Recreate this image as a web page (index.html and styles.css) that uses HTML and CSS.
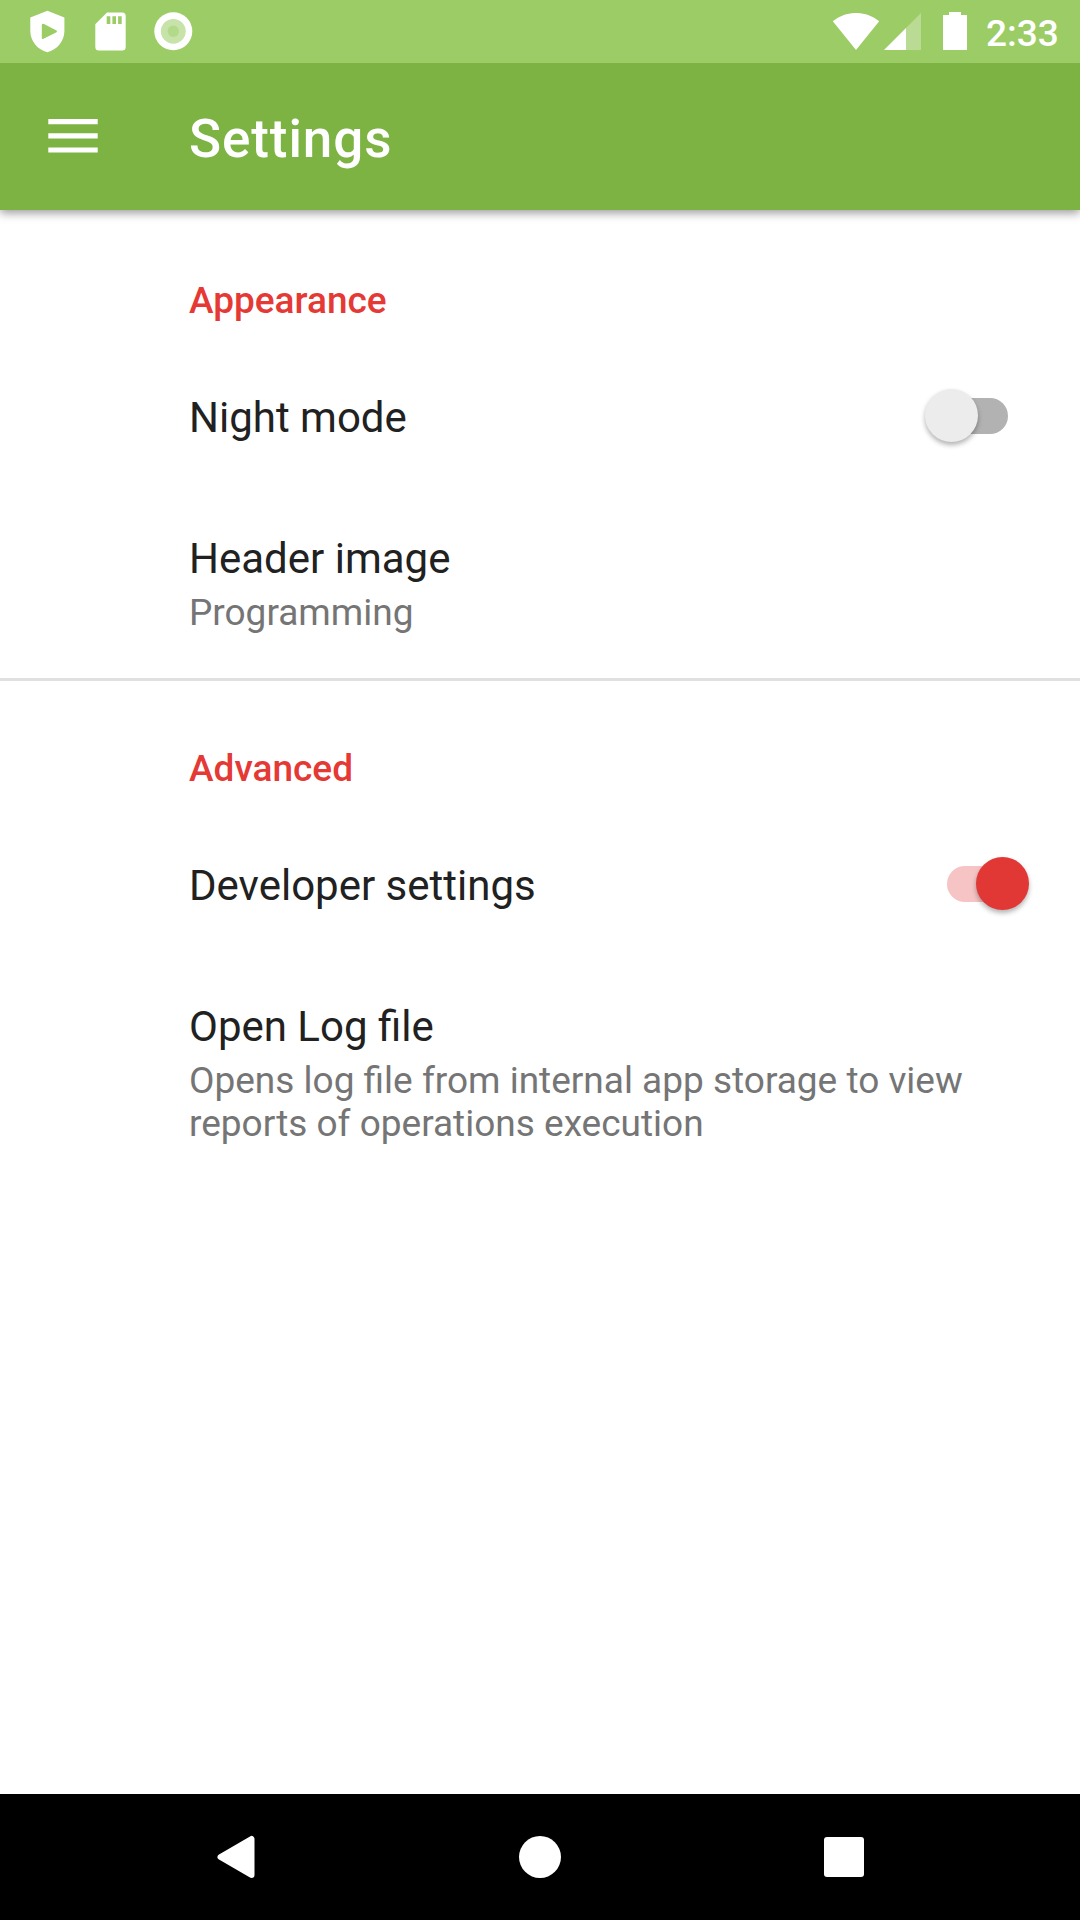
FILE: index.html
```html
<!DOCTYPE html>
<html lang="en">
<head>
<meta charset="utf-8">
<title>Settings</title>
<link rel="stylesheet" href="styles.css">
</head>
<body>
<header class="status-bar">
  <div class="status-left">
    <svg class="icon-shield" width="36" height="44" viewBox="30 10 36 44"><path fill="#fff" fill-rule="evenodd" d="M47.4 10.8 64.4 17.500V31C64.400 41 57 50 47.400 52.200C37.700 50 30.300 41 30.300 31V17.500ZM42.800 23.700Q41.800 23.700 41.800 25V38Q41.800 39.300 43 39L56.500 32.300Q57.500 31.400 56.500 30.600L44 23.900Z"/></svg>
    <svg class="icon-sd" width="32" height="40" viewBox="95 12 32 40"><path fill="#fff" fill-rule="evenodd" d="M107 12.500H122.200Q125.700 12.500 125.700 16V47Q125.700 50.500 122.200 50.500H98.800Q95.300 50.500 95.300 47V24.200ZM106.700 16.300V24H110.300V16.300ZM112.400 16.300V24H116V16.300ZM118.100 16.300V24H121.700V16.300Z"/></svg>
    <svg class="icon-record" width="40" height="40" viewBox="0 0 40 40"><circle cx="20.300" cy="20.300" r="19" fill="#fff"/><circle cx="20.300" cy="20.300" r="12.400" fill="#c7e3a9"/><circle cx="20.300" cy="20.300" r="5.700" fill="#b3d98a"/></svg>
  </div>
  <div class="status-right">
    <svg class="icon-wifi" width="48" height="38" viewBox="832 13 48 38"><path fill="#fff" d="M832.800 21.300C846.500 10.200 865.500 10.200 879.200 21.300L856 50Z"/></svg>
    <svg class="icon-signal" width="38" height="38" viewBox="884 13 38 38"><path fill="#fff" opacity=".3" d="M906 28 921 13V50H906Z"/><path fill="#fff" d="M884 50 906 28V50Z"/></svg>
    <svg class="icon-battery" width="24" height="38" viewBox="0 0 24 38"><path fill="#fff" d="M6 0H18V3H24V38H0V3H6Z"/></svg>
    <span class="clock">2:33</span>
  </div>
</header>
<div class="toolbar">
  <svg class="menu" width="50" height="34" viewBox="0 0 50 34"><path fill="#fff" d="M.3 0H49.700V5.200H.3ZM.3 14.200H49.700V19.400H.3ZM.3 28.400H49.700V33.600H.3Z"/></svg>
  <h1 class="title">Settings</h1>
</div>
<main class="settings">
  <section class="group">
    <h2 class="category">Appearance</h2>
    <div class="row-switch">
      <div class="label">Night mode</div>
      <div class="switch"></div>
    </div>
    <div class="row">
      <div class="label">Header image</div>
      <div class="summary">Programming</div>
    </div>
  </section>
  <section class="group group-divided">
    <h2 class="category">Advanced</h2>
    <div class="row-switch">
      <div class="label">Developer settings</div>
      <div class="switch switch-on"></div>
    </div>
    <div class="row">
      <div class="label">Open Log file</div>
      <div class="summary">Opens log file from internal app storage to view reports of operations execution</div>
    </div>
  </section>
</main>
<nav class="nav-bar">
  <svg width="41" height="44" viewBox="0 0 41 44"><path fill="#fff" stroke="#fff" stroke-width="6" stroke-linejoin="round" d="M5.500 22 36.500 4V40Z"/></svg>
  <svg width="42" height="42" viewBox="0 0 42 42"><circle cx="21" cy="21" r="21" fill="#fff"/></svg>
  <svg width="40" height="40" viewBox="0 0 40 40"><rect width="40" height="40" rx="3" fill="#fff"/></svg>
</nav>
</body>
</html>
```
FILE: styles.css
```css
* {
  box-sizing: border-box;
}

body {
  margin: 0;
  width: 1080px;
  height: 1920px;
  display: flex;
  flex-direction: column;
  overflow: hidden;
  background: #fff;
  font-family: Roboto, sans-serif;
}

svg {
  display: block;
  flex: none;
}

.status-bar {
  position: relative;
  z-index: 1;
  height: 63px;
  flex: none;
  display: flex;
  justify-content: space-between;
  background: #9ccc65;
}

.status-left,
.status-right {
  display: flex;
  align-items: flex-start;
}

.status-left {
  padding-left: 30px;
}

.icon-shield {
  margin-top: 10px;
}

.icon-sd {
  margin: 12px 0 0 29px;
}

.icon-record {
  margin: 11px 0 0 26px;
}

.status-right {
  padding-right: 21px;
}

.icon-wifi {
  margin-top: 13px;
}

.icon-signal {
  margin: 13px 0 0 4px;
}

.icon-battery {
  margin: 12px 19px 0 21px;
}

.clock {
  width: 73px;
  padding-top: 12px;
  line-height: 43px;
  font-size: 37px;
  font-weight: 500;
  color: #fff;
  white-space: nowrap;
}

.toolbar {
  height: 147px;
  flex: none;
  display: flex;
  align-items: flex-start;
  padding-left: 48px;
  background: #7cb342;
  box-shadow: 0 3px 9px rgba(0, 0, 0, 0.4);
}

.menu {
  margin-top: 56px;
}

.title {
  margin: 45px 0 0 91px;
  line-height: 62px;
  font-size: 53px;
  font-weight: 500;
  letter-spacing: 0.9px;
  color: #fff;
}

.settings {
  flex: 1;
}

.group {
  padding: 69px 51px 44px 189px;
}

.group-divided {
  border-top: 3px solid #e0e0e0;
  padding-top: 66px;
}

.category {
  margin: 0 0 31px;
  line-height: 43px;
  font-size: 37px;
  font-weight: 500;
  color: #e53935;
}

.row-switch {
  height: 125px;
  display: flex;
  align-items: center;
  justify-content: space-between;
}

.row-switch .label {
  padding-top: 4px;
}

.row {
  padding-top: 56px;
}

.label {
  line-height: 49px;
  font-size: 42px;
  color: #212121;
}

.summary {
  margin-top: 8px;
  line-height: 43px;
  font-size: 37px;
  color: #757575;
}

.switch {
  width: 104px;
  height: 53px;
  display: grid;
  align-items: center;
}

.switch::before,
.switch::after {
  content: "";
  grid-area: 1 / 1;
}

.switch::before {
  width: 61px;
  height: 36px;
  border-radius: 18px;
  justify-self: center;
  background: #b2b2b2;
}

.switch::after {
  width: 53px;
  height: 53px;
  border-radius: 50%;
  background: #ececec;
  box-shadow: 0 3px 5px rgba(0, 0, 0, 0.3);
}

.switch-on::before {
  background: #f6c4c4;
}

.switch-on::after {
  justify-self: end;
  background: #e13836;
}

.nav-bar {
  height: 126px;
  flex: none;
  display: flex;
  align-items: center;
  justify-content: space-between;
  padding: 0 216px 0 215px;
  background: #000;
}
```
